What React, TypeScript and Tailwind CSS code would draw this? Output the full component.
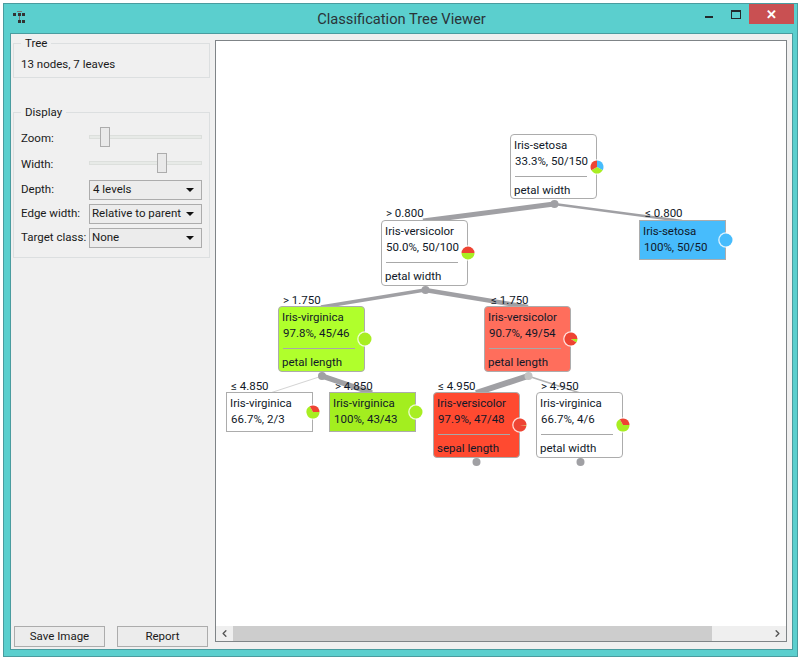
import { ChevronLeft, ChevronRight } from 'lucide-react';

const RED = '#ee4433';
const BLUE = '#47bcfc';
const GREEN = '#a8ee22';

interface Slice {
  value: number;
  color: string;
}

interface NodeData {
  x: number;
  y: number;
  h: number;
  title: string;
  stats: string;
  attr?: string;
  bg: string;
  pie: Slice[];
  start?: number;
}

// coordinates are relative to the canvas inner box
const nodes: NodeData[] = [
  { x: 294, y: 93, h: 65, title: 'Iris-setosa', stats: '33.3%, 50/150', attr: 'petal width', bg: 'bg-white', start: -90, pie: [{ value: 1, color: BLUE }, { value: 1, color: GREEN }, { value: 1, color: RED }] },
  { x: 165, y: 179, h: 66, title: 'Iris-versicolor', stats: '50.0%, 50/100', attr: 'petal width', bg: 'bg-white', pie: [{ value: 0.5, color: GREEN }, { value: 0.5, color: RED }] },
  { x: 423, y: 179, h: 40, title: 'Iris-setosa', stats: '100%, 50/50', bg: 'bg-[#47bcfc]', pie: [{ value: 1, color: BLUE }] },
  { x: 62, y: 265, h: 66, title: 'Iris-virginica', stats: '97.8%, 45/46', attr: 'petal length', bg: 'bg-[#b0ff2c]', pie: [{ value: 1, color: GREEN }] },
  { x: 268, y: 265, h: 66, title: 'Iris-versicolor', stats: '90.7%, 49/54', attr: 'petal length', bg: 'bg-[#ff6e5c]', pie: [{ value: 0.093, color: GREEN }, { value: 0.907, color: RED }] },
  { x: 10, y: 351, h: 40, title: 'Iris-virginica', stats: '66.7%, 2/3', bg: 'bg-white', pie: [{ value: 0.667, color: GREEN }, { value: 0.333, color: RED }] },
  { x: 113, y: 351, h: 40, title: 'Iris-virginica', stats: '100%, 43/43', bg: 'bg-[#a3ee1f]', pie: [{ value: 1, color: GREEN }] },
  { x: 217, y: 351, h: 66, title: 'Iris-versicolor', stats: '97.9%, 47/48', attr: 'sepal length', bg: 'bg-[#ff4a30]', pie: [{ value: 0.021, color: GREEN }, { value: 0.979, color: RED }] },
  { x: 320, y: 351, h: 66, title: 'Iris-virginica', stats: '66.7%, 4/6', attr: 'petal width', bg: 'bg-white', pie: [{ value: 0.667, color: GREEN }, { value: 0.333, color: RED }] },
];

const edges = [
  { x1: 338, y1: 163, x2: 207, y2: 180, w: 5, c: '#a0a0a4' },
  { x1: 338, y1: 163, x2: 466, y2: 180, w: 2.5, c: '#a0a0a4' },
  { x1: 209, y1: 249, x2: 105, y2: 266, w: 3.5, c: '#a0a0a4' },
  { x1: 209, y1: 249, x2: 312, y2: 266, w: 4.5, c: '#a0a0a4' },
  { x1: 106, y1: 335, x2: 54, y2: 352, w: 1, c: '#d4d4d4' },
  { x1: 106, y1: 335, x2: 156, y2: 352, w: 5.5, c: '#a0a0a4' },
  { x1: 312, y1: 335, x2: 260, y2: 352, w: 6, c: '#a0a0a4' },
  { x1: 312, y1: 335, x2: 364, y2: 352, w: 1.5, c: '#b4b4b4' },
];

const dots = [
  { x: 338.5, y: 163, c: '#a0a0a4' },
  { x: 209.5, y: 249, c: '#a0a0a4' },
  { x: 106, y: 335, c: '#a0a0a4' },
  { x: 312.5, y: 335, c: '#c4c4c4' },
  { x: 260.5, y: 421, c: '#a0a0a4' },
  { x: 364.5, y: 421, c: '#a0a0a4' },
];

const edgeLabels = [
  { x: 170, y: 165, text: '> 0.800' },
  { x: 429, y: 165, text: '≤ 0.800' },
  { x: 67, y: 252, text: '> 1.750' },
  { x: 275, y: 252, text: '≤ 1.750' },
  { x: 15, y: 338, text: '≤ 4.850' },
  { x: 119, y: 338, text: '> 4.850' },
  { x: 222, y: 338, text: '≤ 4.950' },
  { x: 325, y: 338, text: '> 4.950' },
];

function Pie({ slices, start = 0 }: { slices: Slice[]; start?: number }) {
  const r = 6.5;
  const total = slices.reduce((s, p) => s + p.value, 0);
  let angle = (start * Math.PI) / 180;
  return (
    <svg width="16" height="16" viewBox="-8 -8 16 16" className="block">
      <circle r="7.8" fill="#ffffff" fillOpacity="0.8" />
      {slices.length === 1 ? (
        <circle r={r} fill={slices[0].color} />
      ) : (
        slices.map((s, i) => {
          const a0 = angle;
          angle += (s.value / total) * Math.PI * 2;
          const large = angle - a0 > Math.PI ? 1 : 0;
          const d = `M0 0L${r * Math.cos(a0)} ${r * Math.sin(a0)}A${r} ${r} 0 ${large} 1 ${r * Math.cos(angle)} ${r * Math.sin(angle)}Z`;
          return <path key={i} d={d} fill={s.color} />;
        })
      )}
    </svg>
  );
}

function TreeNode({ node }: { node: NodeData }) {
  const rounded = node.attr ? 'rounded-[4px]' : '';
  return (
    <div
      className={`absolute w-[87px] border border-[#acacac] leading-[16px] text-[#101828] ${node.bg} ${rounded}`}
      style={{ left: node.x, top: node.y, height: node.h }}
    >
      <div className="pl-[3px] pt-[2px] whitespace-nowrap">{node.title}</div>
      <div className="pl-[4px] whitespace-nowrap">{node.stats}</div>
      {node.attr && (
        <>
          <div className="ml-[4px] mr-[9px] mt-[7px] mb-[5px] h-px bg-[#a8a8a8]" />
          <div className="pl-[3px] whitespace-nowrap">{node.attr}</div>
        </>
      )}
      <div className="absolute right-[-9px]" style={{ top: node.h / 2 - 9 }}>
        <Pie slices={node.pie} start={node.start} />
      </div>
    </div>
  );
}

function Slider({ pos }: { pos: number }) {
  return (
    <div className="relative h-[20px] w-[113px]">
      <div className="absolute left-0 right-0 top-[8px] h-[4px] border border-[#dcdfdc] bg-[#e7eae7]" />
      <div className="absolute top-0 h-[20px] w-[10px] border border-[#acacac] bg-[#e9e9e9]" style={{ left: pos }} />
    </div>
  );
}

function Combo({ value, inset }: { value: string; inset?: boolean }) {
  return (
    <div className={`flex h-[20px] w-[113px] items-center justify-between border border-[#acacac] bg-[#ececec] pr-[7px] ${inset ? 'pl-[3px]' : 'pl-[2px]'}`}>
      <span className="whitespace-nowrap pt-px">{value}</span>
      <span className="h-0 w-0 border-x-[4px] border-t-[4px] border-x-transparent border-t-[#111111]" />
    </div>
  );
}

function Row({ label, slider, children }: { label: string; slider?: boolean; children: React.ReactNode }) {
  return (
    <div className="flex items-center">
      <span className={`w-[68px] whitespace-nowrap ${slider ? 'pt-[3px]' : 'pt-[1px]'}`}>{label}</span>
      {children}
    </div>
  );
}

function TreeIcon() {
  return (
    <svg width="16" height="14" viewBox="0 0 16 14" fill="#333">
      <rect x="5" y="0" width="5" height="1" fill="#777" />
      <rect x="1" y="2" width="3" height="3" />
      <rect x="6" y="2" width="3" height="3" />
      <rect x="10" y="2" width="3" height="3" />
      <rect x="7" y="5" width="1" height="4" fill="#777" />
      <rect x="6" y="9" width="3" height="3" />
      <rect x="10" y="9" width="3" height="3" />
    </svg>
  );
}

export default function App() {
  return (
    <div className="h-[661px] w-[804px] bg-white pl-[3px] pt-[3px] font-['Roboto',sans-serif] text-[11.5px] text-[#1a1a1a]">
      <div className="flex h-[654px] w-[795px] flex-col border border-[#4a9c9f] bg-[#5bcfce] pl-[6px] pr-[4px] pb-[6px]">
        {/* title bar */}
        <div className="relative flex h-[29px] shrink-0 items-center justify-center text-[14.7px] text-[#2a3338]">
          <div className="absolute left-[2px] top-[7px]">
            <TreeIcon />
          </div>
          <span className="pt-[2px]">Classification Tree Viewer</span>
          <div className="absolute right-[-1px] top-0 flex items-start">
            <span className="mb-[13px] mr-[18px] mt-[12px] h-[2px] w-[8px] bg-[#22292c]" />
            <span className="mr-[8px] mt-[6px] h-[9px] w-[10px] border border-t-2 border-[#22292c]" />
            <span className="flex h-[20px] w-[45px] items-center justify-center bg-[#c95052] text-[13px] font-bold leading-none text-white">✕</span>
          </div>
        </div>

        {/* client area */}
        <div className="flex min-h-0 flex-1 border border-[#4a9c9f] bg-[#f0f0f0]">
          <div className="flex w-[204px] shrink-0 flex-col pl-[2px] pr-[5px] pt-[2px] pb-[2px]">
            <fieldset className="h-[42px] border border-[#dcdfe0] px-[7px]">
              <legend className="ml-[0px] px-[4px] leading-[14px]">Tree</legend>
              <div className="mt-[6px]">13 nodes, 7 leaves</div>
            </fieldset>
            <fieldset className="mt-[27px] h-[153px] border border-[#dcdfe0] px-[7px]">
              <legend className="ml-[0px] px-[4px] leading-[14px]">Display</legend>
              <div className="mt-[8px] flex flex-col gap-[4px]">
                <div className="flex flex-col gap-[6px]">
                  <Row label="Zoom:" slider><Slider pos={11} /></Row>
                  <Row label="Width:" slider><Slider pos={68} /></Row>
                </div>
                <div className="mt-[2px] flex flex-col gap-[4px]">
                  <Row label="Depth:"><Combo value="4 levels" inset /></Row>
                  <Row label="Edge width:"><Combo value="Relative to parent" /></Row>
                  <Row label="Target class:"><Combo value="None" /></Row>
                </div>
              </div>
            </fieldset>
            <div className="mt-auto flex gap-[12px] pl-[1px]">
              <button className="h-[21px] w-[91px] border border-[#acacac] bg-[#ececec] pt-px">Save Image</button>
              <button className="h-[21px] w-[91px] border border-[#acacac] bg-[#ececec] pt-px">Report</button>
            </div>
          </div>

          {/* tree canvas */}
          <div className="mb-[7px] mr-[5px] mt-[6px] flex min-w-0 flex-1 flex-col border border-[#7f8487] bg-white">
            <div className="relative min-h-0 flex-1 overflow-hidden">
              <svg className="absolute left-0 top-0" width="570" height="586">
                {edges.map((e, i) => (
                  <line key={i} x1={e.x1} y1={e.y1} x2={e.x2} y2={e.y2} stroke={e.c} strokeWidth={e.w} />
                ))}
                {dots.map((d, i) => (
                  <circle key={i} cx={d.x} cy={d.y} r="4" fill={d.c} />
                ))}
              </svg>
              {edgeLabels.map((l) => (
                <span key={l.text} className="absolute whitespace-nowrap leading-[14px] text-[#101828]" style={{ left: l.x, top: l.y }}>
                  {l.text}
                </span>
              ))}
              {nodes.map((n, i) => (
                <TreeNode key={i} node={n} />
              ))}
            </div>
            <div className="flex h-[15px] shrink-0 items-center bg-[#efefef]">
              <div className="flex w-[17px] justify-center">
                <ChevronLeft size={11} strokeWidth={3} className="text-[#555555]" />
              </div>
              <div className="h-full w-[479px] bg-[#cdcdcd]" />
              <div className="ml-auto flex w-[17px] justify-center">
                <ChevronRight size={11} strokeWidth={3} className="text-[#555555]" />
              </div>
            </div>
          </div>
        </div>
      </div>
    </div>
  );
}
